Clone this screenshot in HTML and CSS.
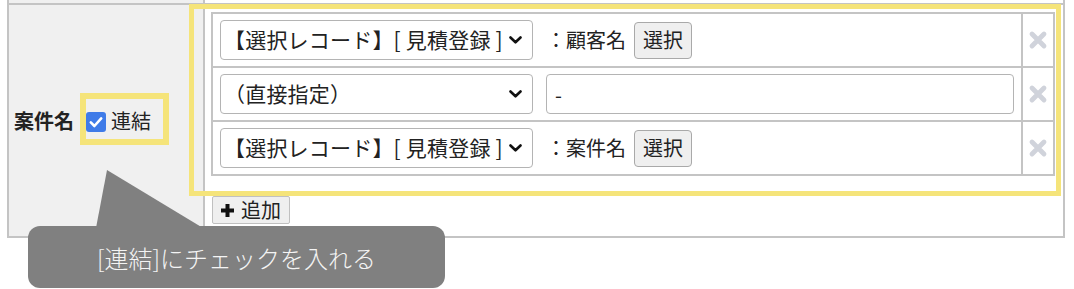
FILE: index.html
```html
<!DOCTYPE html>
<html lang="ja">
<head>
<meta charset="utf-8">
<title>案件名 連結</title>
<link rel="stylesheet" href="styles.css">
</head>
<body>
<div class="page">
  <div class="form-table">
    <div class="row row-prev">
      <div class="th"></div>
      <div class="td"></div>
    </div>
    <div class="row row-main">
      <div class="th">
        <span class="label">案件名</span>
        <span class="link">
          <span class="checkbox"><svg viewBox="0 0 20 20" width="20" height="20"><path d="M4.8 10.4 L8.4 14 L15.2 6.4" fill="none" stroke="#fff" stroke-width="2.6" stroke-linecap="round" stroke-linejoin="round"/></svg></span>
          <span class="link-text">連結</span>
        </span>
      </div>
      <div class="td">
        <div class="items">
          <div class="item">
            <div class="item-main">
              <div class="select"><span class="select-text">【選択レコード】[ 見積登録 ]</span><svg class="chev" viewBox="0 0 13 8" width="13" height="8"><polyline points="1.5,1.5 6.5,6.3 11.5,1.5" fill="none" stroke="#111" stroke-width="2.6" stroke-linecap="round" stroke-linejoin="round"/></svg></div>
              <span class="field">：顧客名</span>
              <span class="btn">選択</span>
            </div>
            <div class="item-del"><svg viewBox="0 0 20 20" width="20" height="20"><path d="M4 4 L16 16 M16 4 L4 16" stroke="#d0d3db" stroke-width="4.8" stroke-linecap="round"/></svg></div>
          </div>
          <div class="item">
            <div class="item-main">
              <div class="select"><span class="select-text">（直接指定）</span><svg class="chev" viewBox="0 0 13 8" width="13" height="8"><polyline points="1.5,1.5 6.5,6.3 11.5,1.5" fill="none" stroke="#111" stroke-width="2.6" stroke-linecap="round" stroke-linejoin="round"/></svg></div>
              <div class="input">-</div>
            </div>
            <div class="item-del"><svg viewBox="0 0 20 20" width="20" height="20"><path d="M4 4 L16 16 M16 4 L4 16" stroke="#d0d3db" stroke-width="4.8" stroke-linecap="round"/></svg></div>
          </div>
          <div class="item">
            <div class="item-main">
              <div class="select"><span class="select-text">【選択レコード】[ 見積登録 ]</span><svg class="chev" viewBox="0 0 13 8" width="13" height="8"><polyline points="1.5,1.5 6.5,6.3 11.5,1.5" fill="none" stroke="#111" stroke-width="2.6" stroke-linecap="round" stroke-linejoin="round"/></svg></div>
              <span class="field">：案件名</span>
              <span class="btn">選択</span>
            </div>
            <div class="item-del"><svg viewBox="0 0 20 20" width="20" height="20"><path d="M4 4 L16 16 M16 4 L4 16" stroke="#d0d3db" stroke-width="4.8" stroke-linecap="round"/></svg></div>
          </div>
        </div>
        <span class="btn-add"><svg viewBox="0 0 15 15" width="15" height="15"><path d="M7.5 1 V14 M1 7.5 H14" stroke="#111" stroke-width="4"/></svg><span>追加</span></span>
      </div>
    </div>
  </div>
  <div class="hl hl-main"></div>
  <div class="hl hl-check"></div>
  <svg class="pointer" viewBox="0 0 110 60" width="110" height="60"><polygon points="12,1 1,59 108,59" fill="#808080"/></svg>
  <div class="callout">[連結]にチェックを入れる</div>
</div>
</body>
</html>
```

FILE: styles.css
```css
* { box-sizing: border-box; }
html, body { margin: 0; padding: 0; background: #fff; }
body {
  font-family: "Noto Sans CJK JP", "Noto Sans", sans-serif;
  color: #222;
  font-size: 20px;
}
.page {
  position: relative;
  width: 1074px;
  height: 289px;
  overflow: hidden;
}
.form-table {
  margin-left: 7px;
  width: 1058px;
  border-left: 2px solid #c4c4c4;
  border-right: 2px solid #c4c4c4;
  border-bottom: 2px solid #c4c4c4;
}
.row {
  display: grid;
  grid-template-columns: 194px 858px;
  column-gap: 2px;
  background: #c4c4c4;
}
.row-prev { height: 3px; }
.row-main { border-top: 2px solid #c4c4c4; }
.th {
  background: #f0f0f0;
  display: flex;
  align-items: center;
  padding-left: 5px;
}
.td { background: #fff; }
.row-main .td { padding: 7px 8px 12px 6px; }
.label { font-weight: 700; line-height: 1.2; }
.link { display: flex; align-items: center; margin-left: 12px; }
.checkbox {
  width: 20px;
  height: 20px;
  border-radius: 3px;
  background: #3f7be8;
  display: flex;
  margin-top: 3px;
}
.link-text { margin-left: 5px; line-height: 1.2; }
.items { border: 2px solid #c4c4c4; }
.item { display: flex; height: 54px; }
.item:first-child { height: 52px; }
.item + .item { border-top: 2px solid #c4c4c4; }
.item-main {
  flex: 1;
  display: flex;
  align-items: center;
  padding: 0 7px;
}
.item-del {
  width: 32px;
  border-left: 2px solid #c4c4c4;
  display: flex;
  align-items: center;
  justify-content: center;
}
.select {
  width: 313px;
  height: 40px;
  border: 1px solid #b4b4b4;
  border-radius: 4px;
  display: flex;
  align-items: center;
  justify-content: space-between;
  padding: 0 10px 0 3px;
  background: #fff;
}
.select-text {
  white-space: pre;
  line-height: 1.2;
  font-size: 21px;
  letter-spacing: 0.2px;
}
.chev { flex: none; }
.field { margin-left: 13px; white-space: nowrap; line-height: 1.2; }
.btn {
  margin-left: 8px;
  height: 37px;
  padding: 0 8px;
  border: 1px solid #a9a9a9;
  border-radius: 4px;
  background: #efefef;
  display: flex;
  align-items: center;
  line-height: 1;
}
.input {
  flex: 1;
  margin-left: 13px;
  height: 40px;
  border: 1px solid #b4b4b4;
  border-radius: 4px;
  padding: 0 8px;
  display: flex;
  align-items: center;
}
.btn-add {
  margin: 20px 0 0 1px;
  height: 28px;
  width: 78px;
  display: flex;
  align-items: center;
  gap: 6px;
  padding-left: 7px;
  border: 1px solid #c0c0c0;
  border-radius: 2px;
  background: #efefef;
  line-height: 1;
}
.hl {
  position: absolute;
  border: 5px solid #f5e47a;
}
.hl-main { left: 189px; top: 4px; width: 872px; height: 192px; }
.hl-check { left: 80px; top: 93px; width: 89px; height: 52px; border-width: 6px; }
.pointer { position: absolute; left: 95px; top: 169px; }
.callout {
  position: absolute;
  left: 28px;
  top: 226px;
  width: 417px;
  height: 62px;
  border-radius: 12px;
  background: #808080;
  color: #f4f4f4;
  font-size: 24px;
  font-weight: 300;
  display: flex;
  align-items: center;
  justify-content: center;
}
```
